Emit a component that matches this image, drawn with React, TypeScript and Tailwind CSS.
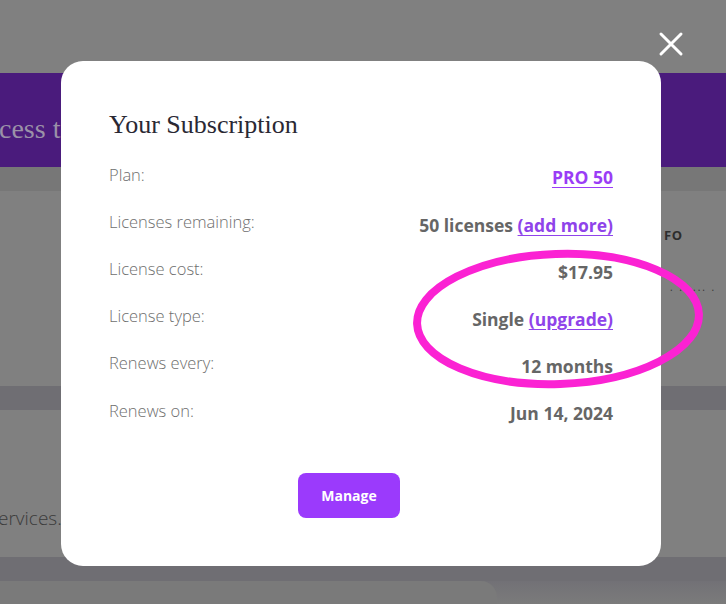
import React from "react";

const rows: { label: string; value: React.ReactNode }[] = [
  {
    label: "Plan:",
    value: <a className="text-[#9a3cf6] underline underline-offset-[3px]">PRO 50</a>,
  },
  {
    label: "Licenses remaining:",
    value: (
      <span>
        50 licenses <a className="text-[#8f43ea] underline underline-offset-[3px]">(add more)</a>
      </span>
    ),
  },
  { label: "License cost:", value: <span>$17.95</span> },
  {
    label: "License type:",
    value: (
      <span>
        Single <a className="text-[#8f43ea] underline underline-offset-[3px]">(upgrade)</a>
      </span>
    ),
  },
  { label: "Renews every:", value: <span>12 months</span> },
  { label: "Renews on:", value: <span>Jun 14, 2024</span> },
];

export default function App() {
  return (
    <div
      className="relative w-[726px] h-[604px] overflow-hidden bg-[#808080]"
      style={{ fontFamily: "'Open Sans', Lato, sans-serif" }}
    >
      {/* background page under overlay */}
      <div className="flex flex-col">
        <div className="h-[73px] bg-[#808080]" />
        <div className="h-[94px] bg-[#4a1b7c] flex items-start pt-[38px]">
          <span
            className="-ml-[1px] text-[28px] leading-[36px] text-[#9b91a8] whitespace-nowrap"
            style={{ fontFamily: "'Liberation Serif', serif" }}
          >
            cess to every feature
          </span>
        </div>
        <div className="h-[24px] bg-[#777777]" />
        <div className="h-[195px] flex bg-[#808080]">
          <div className="flex-1" />
          <div className="w-[64px] flex flex-col pl-[2px]">
            <span className="mt-[38px] text-[13px] font-bold tracking-wider text-[#2d2d2d] leading-none">
              FO
            </span>
            <span className="mt-[40px] ml-[6px] text-[10px] tracking-[2px] text-[#333] leading-none whitespace-nowrap">
              . . .... .
            </span>
          </div>
        </div>
        <div className="h-[24px] bg-[#6f6e73]" />
        <div className="h-[147px] bg-[#808080] flex items-end pb-[25px]">
          <span className="-ml-[2px] text-[19px] font-light text-[#3b3b3b] whitespace-nowrap">ervices.com</span>
        </div>
        <div className="h-[24px] bg-[#6f6e73]" />
        <div className="h-[23px] flex bg-gradient-to-b from-[#727176] to-[#7b7b7b]">
          <div className="w-[497px] bg-[#7a7a7a] rounded-tr-[16px]" />
        </div>
      </div>

      {/* close icon */}
      <svg className="absolute left-[657px] top-[30px]" width="28" height="28" viewBox="0 0 28 28">
        <path d="M4 4 L24 24 M24 4 L4 24" stroke="#ffffff" strokeWidth="3" strokeLinecap="round" />
      </svg>

      {/* modal */}
      <div className="absolute left-[61px] top-[61px] w-[600px] h-[505px] bg-white rounded-[22px] px-[48px] pt-[47px] flex flex-col">
        <h2
          className="text-[26px] leading-[34px] text-[#2a2833]"
          style={{ fontFamily: "'Liberation Serif', serif" }}
        >
          Your Subscription
        </h2>
        <div className="mt-[9.5px] flex flex-col">
          {rows.map((r) => (
            <div key={r.label} className="h-[47.2px] flex items-center justify-between">
              <span className="text-[16.5px] font-light text-[#6e6e6e]">{r.label}</span>
              <span className="pt-[5px] text-[17.5px] font-bold text-[#666666]">{r.value}</span>
            </div>
          ))}
        </div>
        <div className="mt-[38px] flex justify-center pr-[24px]">
          <button className="w-[102px] h-[45px] rounded-[8px] bg-[#9b3afc] text-white text-[14px] font-bold">
            Manage
          </button>
        </div>
      </div>

      {/* annotation ellipse */}
      <svg className="absolute left-0 top-0" width="726" height="604" viewBox="0 0 726 604">
        <ellipse
          cx="558"
          cy="319"
          rx="141"
          ry="65"
          transform="rotate(-2 558 319)"
          fill="none"
          stroke="#fb22d3"
          strokeWidth="8"
        />
      </svg>
    </div>
  );
}
